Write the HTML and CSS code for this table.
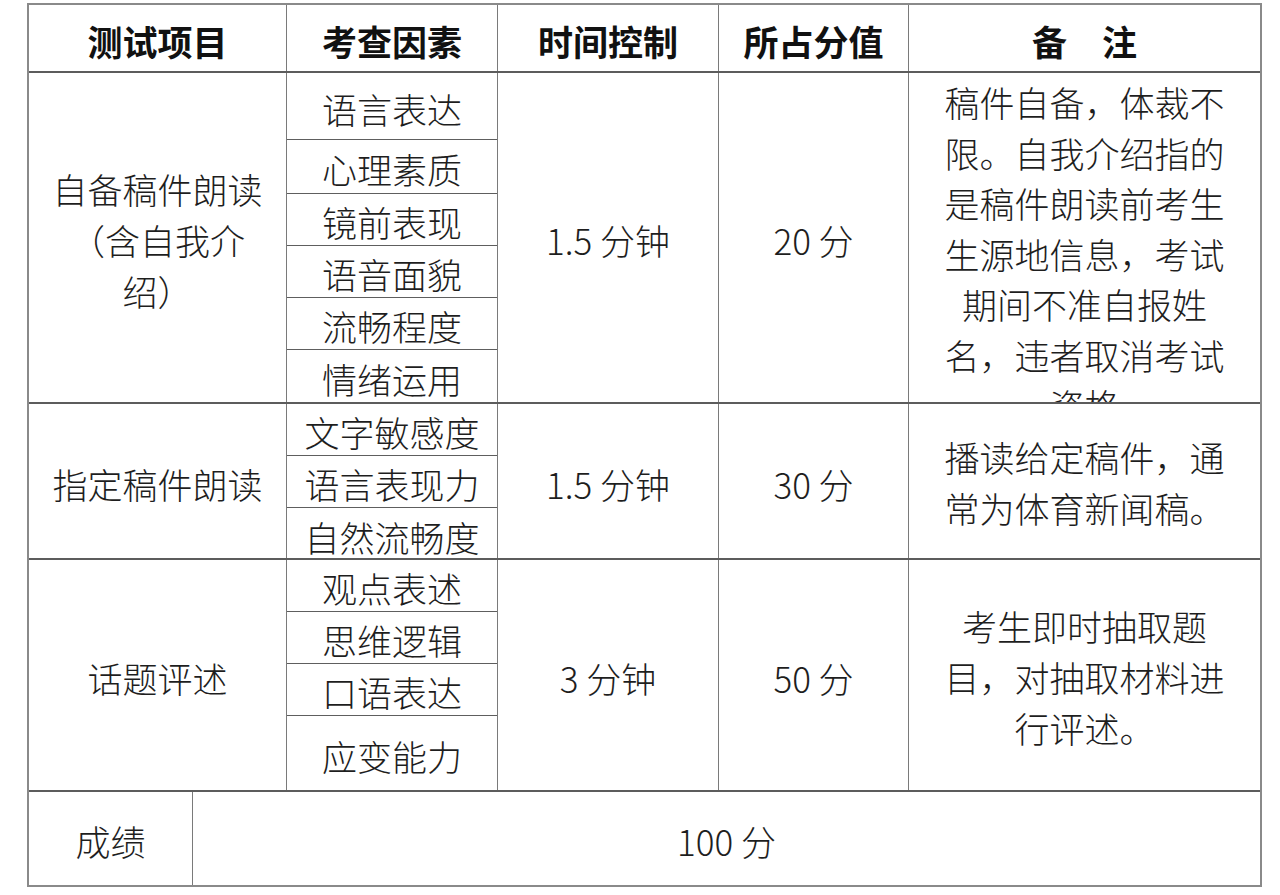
FILE: index.html
```html
<!DOCTYPE html>
<html lang="zh-CN">
<head>
<meta charset="utf-8">
<title>测试项目</title>
<link rel="stylesheet" href="styles.css">
</head>
<body>
<div class="sheet">
  <div class="row head">
    <div class="cell c1">测试项目</div>
    <div class="cell c2">考查因素</div>
    <div class="cell c3">时间控制</div>
    <div class="cell c4">所占分值</div>
    <div class="cell c5">备　注</div>
  </div>

  <div class="row sec s1">
    <div class="cell c1 item">自备稿件朗读（含自我介绍）</div>
    <div class="factors c2">
      <div class="factor h68">语言表达</div>
      <div class="factor h54">心理素质</div>
      <div class="factor">镜前表现</div>
      <div class="factor">语音面貌</div>
      <div class="factor">流畅程度</div>
      <div class="factor">情绪运用</div>
    </div>
    <div class="cell c3">1.5 分钟</div>
    <div class="cell c4">20 分</div>
    <div class="cell c5 note note-top">稿件自备，体裁不限。自我介绍指的是稿件朗读前考生生源地信息，考试期间不准自报姓名，违者取消考试资格</div>
  </div>

  <div class="row sec s2">
    <div class="cell c1 item">指定稿件朗读</div>
    <div class="factors c2">
      <div class="factor">文字敏感度</div>
      <div class="factor">语言表现力</div>
      <div class="factor">自然流畅度</div>
    </div>
    <div class="cell c3">1.5 分钟</div>
    <div class="cell c4">30 分</div>
    <div class="cell c5 note">播读给定稿件，通常为体育新闻稿。</div>
  </div>

  <div class="row sec s3">
    <div class="cell c1 item">话题评述</div>
    <div class="factors c2">
      <div class="factor">观点表述</div>
      <div class="factor">思维逻辑</div>
      <div class="factor">口语表达</div>
      <div class="factor">应变能力</div>
    </div>
    <div class="cell c3">3 分钟</div>
    <div class="cell c4">50 分</div>
    <div class="cell c5 note">考生即时抽取题目，对抽取材料进行评述。</div>
  </div>

  <div class="row total">
    <div class="cell t1">成绩</div>
    <div class="cell t2">100 分</div>
  </div>
</div>
</body>
</html>
```

FILE: styles.css
```css
html, body {
  margin: 0;
  padding: 0;
  background: #ffffff;
}

body {
  font-family: "Noto Sans CJK SC", "Noto Sans", sans-serif;
  font-size: 35px;
  font-weight: 300;
  color: #1e1e1e;
}

.sheet {
  box-sizing: border-box;
  width: 1235px;
  margin: 3px 0 0 27px;
  border-top: 2px solid #8a8a8a;
  border-left: 2px solid #8a8a8a;
  border-right: 2px solid #8a8a8a;
}

.row {
  box-sizing: border-box;
  display: flex;
  border-bottom: 2px solid #5c5c5c;
}

.head { height: 68px; font-weight: 700; color: #111111; }
.s1 { height: 331px; }
.s2 { height: 156px; }
.s3 { height: 232px; }
.total { height: 95px; border-bottom-color: #8a8a8a; }

.cell {
  box-sizing: border-box;
  display: flex;
  align-items: center;
  justify-content: center;
  text-align: center;
  border-right: 1px solid #7a7a7a;
  line-height: 51px;
  padding-top: 4px;
}

.c1 { width: 258px; }
.c2 { width: 211px; }
.c3 { width: 221px; }
.c4 { width: 190px; }
.c5 { flex: 1; border-right: 0; }

.item { padding-left: 18px; padding-right: 18px; }

.factors {
  box-sizing: border-box;
  display: flex;
  flex-direction: column;
  border-right: 1px solid #7a7a7a;
}

.factor {
  box-sizing: border-box;
  height: 52px;
  display: flex;
  align-items: center;
  justify-content: center;
  border-bottom: 1px solid #5e5e5e;
  padding-top: 4px;
  white-space: nowrap;
}
.factor.h68 { height: 68px; }
.factor.h54 { height: 54px; }
.factor:last-child { flex: 1; border-bottom: 0; }

.note {
  padding-left: 26px;
  padding-right: 26px;
  padding-top: 2px;
}

.note-top {
  display: block;
  overflow: hidden;
  line-height: 50.5px;
  padding-top: 4px;
}

.t1 { width: 164px; }
.t2 { flex: 1; border-right: 0; }
```
